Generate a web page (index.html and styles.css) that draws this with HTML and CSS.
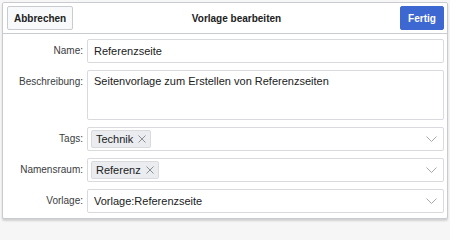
FILE: index.html
```html
<!DOCTYPE html>
<html lang="de">
<head>
<meta charset="utf-8">
<title>Vorlage bearbeiten</title>
<link rel="stylesheet" href="styles.css">
</head>
<body>
<div class="dialog">
  <div class="head">
    <button class="btn btn-cancel">Abbrechen</button>
    <div class="title">Vorlage bearbeiten</div>
    <button class="btn btn-done">Fertig</button>
  </div>
  <div class="fields">
    <label class="lbl">Name:</label>
    <div class="input">Referenzseite</div>

    <label class="lbl">Beschreibung:</label>
    <div class="input area">Seitenvorlage zum Erstellen von Referenzseiten</div>

    <label class="lbl">Tags:</label>
    <div class="input multi">
      <span class="chip">Technik<svg class="x" width="8" height="8" viewBox="0 0 8 8"><path d="M0.5 0.5 L7.5 7.5 M7.5 0.5 L0.5 7.5" fill="none" stroke="#8a8f94" stroke-width="1"/></svg></span>
      <svg class="chev" width="11" height="6" viewBox="0 0 11 6"><path d="M0.5 0.5 L5.5 5.5 L10.5 0.5" fill="none" stroke="#a2a9b1" stroke-width="1"/></svg>
    </div>

    <label class="lbl">Namensraum:</label>
    <div class="input multi">
      <span class="chip">Referenz<svg class="x" width="8" height="8" viewBox="0 0 8 8"><path d="M0.5 0.5 L7.5 7.5 M7.5 0.5 L0.5 7.5" fill="none" stroke="#8a8f94" stroke-width="1"/></svg></span>
      <svg class="chev" width="11" height="6" viewBox="0 0 11 6"><path d="M0.5 0.5 L5.5 5.5 L10.5 0.5" fill="none" stroke="#a2a9b1" stroke-width="1"/></svg>
    </div>

    <label class="lbl">Vorlage:</label>
    <div class="input multi">
      <span class="val">Vorlage:Referenzseite</span>
      <svg class="chev" width="11" height="6" viewBox="0 0 11 6"><path d="M0.5 0.5 L5.5 5.5 L10.5 0.5" fill="none" stroke="#a2a9b1" stroke-width="1"/></svg>
    </div>
  </div>
</div>
</body>
</html>
```
FILE: styles.css
```css
* { box-sizing: border-box; }
html, body { margin: 0; padding: 0; }
body {
  background: #f6f6f6;
  font-family: "Liberation Sans", Arial, sans-serif;
  font-size: 10px;
  color: #202122;
  width: 450px;
  height: 223px;
  overflow: hidden;
}
.dialog {
  margin: 2px 0 0 2px;
  width: 446px;
  height: 217px;
  background: #fff;
  border: 1px solid #c8ccd1;
  border-radius: 2px;
  box-shadow: 0 2px 2px rgba(0,0,0,0.15);
  display: flex;
  flex-direction: column;
}
.head {
  height: 31px;
  border-bottom: 1px solid #c8ccd1;
  display: flex;
  align-items: center;
  padding: 0 3px 0 4px;
}
.btn {
  font-family: inherit;
  font-size: 10px;
  font-weight: bold;
  height: 24px;
  border-radius: 2px;
  margin: 0;
  cursor: pointer;
}
.btn-cancel {
  width: 66px;
  background: #f8f9fa;
  border: 1px solid #c8ccd1;
  color: #202122;
}
.btn-done {
  width: 44px;
  background: #3d67d1;
  border: 1px solid #3d67d1;
  color: #fff;
}
.title {
  flex: 1;
  text-align: center;
  font-weight: bold;
}
.fields {
  display: grid;
  grid-template-columns: 77px 1fr;
  column-gap: 4px;
  row-gap: 7px;
  padding: 5px 3px 0 3px;
}
.lbl {
  text-align: right;
  line-height: 24px;
  color: #3a3c3e;
}
.input {
  height: 24px;
  border: 1px solid #d8dadd;
  border-radius: 2px;
  padding: 0 6px;
  line-height: 22px;
  font-size: 11px;
}
.area {
  height: 50px;
  line-height: 13px;
  padding-top: 4px;
}
.multi {
  display: flex;
  align-items: center;
  padding: 0 6px 0 3px;
}
.val { padding-left: 3px; }
.chip {
  display: inline-flex;
  align-items: center;
  height: 18px;
  background: #eaecf0;
  border: 1px solid #d8dadd;
  border-radius: 2px;
  padding: 0 4px 0 4px;
  line-height: 16px;
}
.x { margin-left: 5px; }
.chev { margin-left: auto; }
```
